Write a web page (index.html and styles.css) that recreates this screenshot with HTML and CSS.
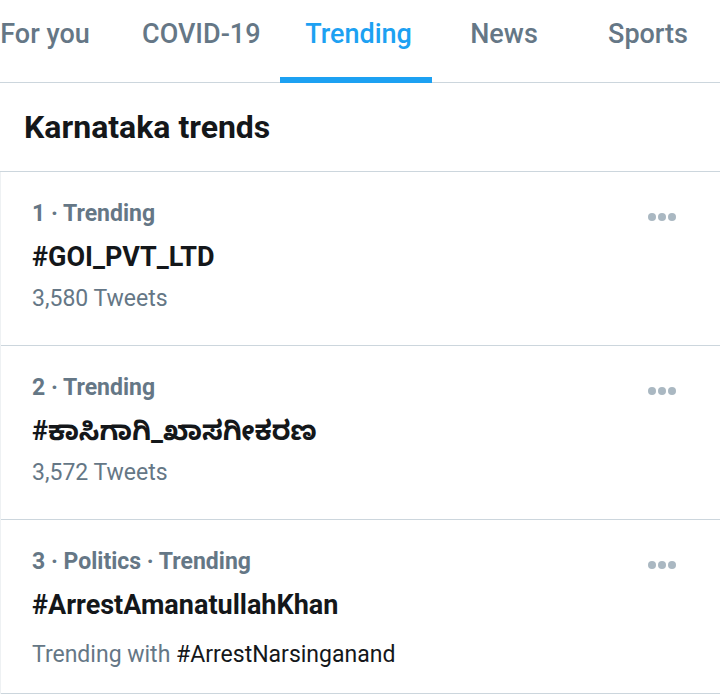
FILE: index.html
```html
<!DOCTYPE html>
<html lang="en">
<head>
    <meta charset="UTF-8">
    <meta name="viewport" content="width=device-width, initial-scale=1.0">
    <title>Explore - Trending</title>
    <link rel="stylesheet" href="styles.css">
</head>
<body>
    <nav class="tabs">
        <div class="tab">For you</div>
        <div class="tab">COVID-19</div>
        <div class="tab active">Trending</div>
        <div class="tab">News</div>
        <div class="tab">Sports</div>
    </nav>

    <h2 class="section-title">Karnataka trends</h2>

    <div class="trend-list">
        <div class="trend">
            <div class="trend-body">
                <div class="trend-meta">1 · Trending</div>
                <div class="trend-tag">#GOI_PVT_LTD</div>
                <div class="trend-count">3,580 Tweets</div>
            </div>
            <div class="more"><span></span><span></span><span></span></div>
        </div>

        <div class="trend">
            <div class="trend-body">
                <div class="trend-meta">2 · Trending</div>
                <div class="trend-tag">#ಕಾಸಿಗಾಗಿ_ಖಾಸಗೀಕರಣ</div>
                <div class="trend-count">3,572 Tweets</div>
            </div>
            <div class="more"><span></span><span></span><span></span></div>
        </div>

        <div class="trend trend-last">
            <div class="trend-body">
                <div class="trend-meta">3 · Politics · Trending</div>
                <div class="trend-tag">#ArrestAmanatullahKhan</div>
                <div class="trend-count">Trending with <span class="related">#ArrestNarsinganand</span></div>
            </div>
            <div class="more"><span></span><span></span><span></span></div>
        </div>
    </div>
</body>
</html>
```

FILE: styles.css
```css
body {
    margin: 0;
    padding: 0;
    background-color: #ffffff;
    font-family: Roboto, "Noto Sans", "Noto Sans Kannada", sans-serif;
    color: #14171a;
    overflow: hidden;
}

.tabs {
    display: flex;
    height: 82px;
    margin-left: -27px;
    border-bottom: 1px solid #ccd6dd;
    white-space: nowrap;
}

.tab {
    position: relative;
    box-sizing: border-box;
    min-width: 144px;
    padding: 16px 25px 0;
    text-align: center;
    font-size: 27px;
    line-height: 36px;
    font-weight: 500;
    color: #657786;
}

.tab.active {
    color: #1da1f2;
}

.tab.active::after {
    content: "";
    position: absolute;
    left: 0;
    right: 0;
    bottom: -1px;
    height: 6px;
    background-color: #1da1f2;
}

.section-title {
    margin: 0;
    padding: 0 24px;
    height: 88px;
    font-size: 32px;
    line-height: 88px;
    font-weight: 700;
    border-bottom: 1px solid #ccd6dd;
}

.trend-list {
    border-left: 1px solid #eef1f3;
}

.trend {
    display: flex;
    justify-content: space-between;
    padding: 22px 44px 28px 31px;
    border-bottom: 1px solid #ccd6dd;
}

.trend-meta {
    font-size: 23px;
    line-height: 40px;
    font-weight: 700;
    color: #657786;
}

.trend-tag {
    font-size: 27px;
    line-height: 46px;
    font-weight: 700;
    color: #14171a;
}

.trend-count {
    font-size: 23px;
    line-height: 37px;
    color: #657786;
}

.trend-last {
    padding-bottom: 20px;
}

.trend-last .trend-count {
    margin-top: 8px;
}

.related {
    color: #14171a;
}

.more {
    display: flex;
    gap: 2px;
    margin-top: 19px;
}

.more span {
    width: 8px;
    height: 8px;
    border-radius: 50%;
    background-color: #aab8c2;
}
```
